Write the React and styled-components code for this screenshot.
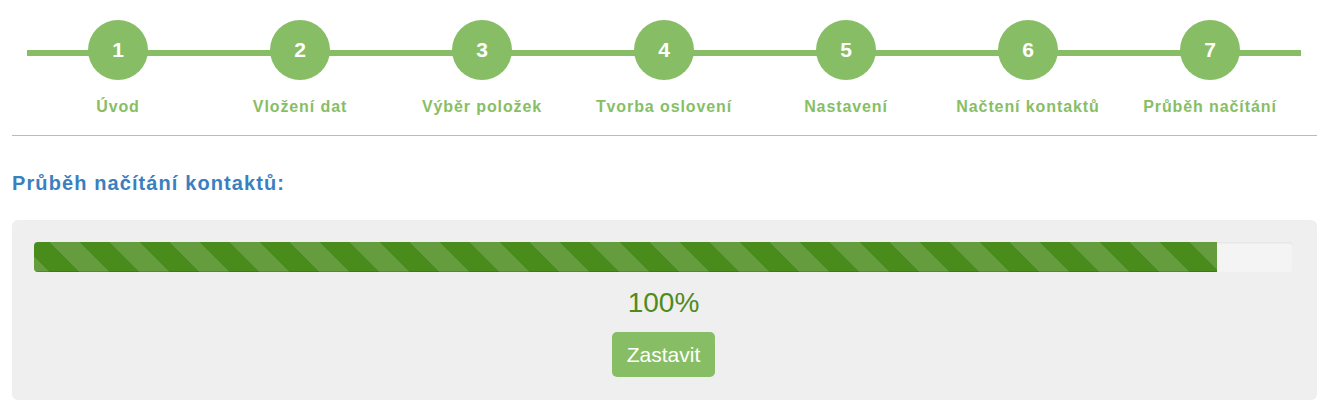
import React from "react";
import styled, { createGlobalStyle } from "styled-components";

const GlobalStyle = createGlobalStyle`
  body {
    margin: 0;
    background: #fff;
    font-family: "Liberation Sans", Arial, sans-serif;
  }
`;

const Page = styled.div`
  padding: 0 14px 0 12px;
`;

const Stepper = styled.ol`
  display: flex;
  list-style: none;
  margin: 0;
  padding: 20px 16px 0 15px;
`;

const Step = styled.li`
  position: relative;
  flex: 1;
  display: flex;
  flex-direction: column;
  align-items: center;

  &::before {
    content: "";
    position: absolute;
    left: 0;
    right: 0;
    top: 30px;
    height: 6px;
    background-color: #87be65;
  }
`;

const Circle = styled.span`
  position: relative;
  width: 60px;
  height: 60px;
  border-radius: 50%;
  background-color: #87be65;
  color: #fff;
  font-size: 21px;
  font-weight: bold;
  display: flex;
  align-items: center;
  justify-content: center;
`;

const StepLabel = styled.span`
  margin-top: 18px;
  font-size: 16px;
  line-height: 18px;
  letter-spacing: 0.9px;
  font-weight: bold;
  color: #87be65;
  white-space: nowrap;
`;

const Divider = styled.div`
  margin-top: 19px;
  height: 1px;
  background-color: #bbb;
`;

const Heading = styled.h2`
  margin: 35px 0 25px;
  font-size: 20px;
  line-height: 24px;
  letter-spacing: 1.1px;
  font-weight: bold;
  color: #3a7fc0;
`;

const Panel = styled.div`
  background-color: #efefef;
  border-radius: 6px;
  padding: 22px 24px 23px 22px;
  display: flex;
  flex-direction: column;
  align-items: center;
`;

const Track = styled.div`
  align-self: stretch;
  height: 30px;
  border-radius: 4px;
  background-color: #f4f4f4;
  box-shadow: inset 0 1px 2px rgba(0, 0, 0, 0.08);
  overflow: hidden;
  display: flex;
`;

const Fill = styled.div`
  height: 100%;
  background-color: #4a8c1c;
  background-image: linear-gradient(
    45deg,
    rgba(255, 255, 255, 0.15) 25%,
    transparent 25%,
    transparent 50%,
    rgba(255, 255, 255, 0.15) 50%,
    rgba(255, 255, 255, 0.15) 75%,
    transparent 75%,
    transparent
  );
  background-size: 60px 60px;
  background-position: 16px 0;
  box-shadow: inset 0 -1px 0 rgba(0, 0, 0, 0.15);
`;

const Percent = styled.div`
  margin-top: 15px;
  font-size: 28px;
  line-height: 32px;
  color: #4f8a1f;
`;

const Button = styled.button`
  margin-top: 13px;
  height: 45px;
  padding: 0 15px;
  border: none;
  border-radius: 5px;
  background-color: #87be65;
  color: #fff;
  font-family: "Liberation Sans", Arial, sans-serif;
  font-size: 21px;
  cursor: pointer;
`;

const steps = [
  "Úvod",
  "Vložení dat",
  "Výběr položek",
  "Tvorba oslovení",
  "Nastavení",
  "Načtení kontaktů",
  "Průběh načítání",
];

const App = () => {
  const progress = 94;

  return (
    <>
      <GlobalStyle />
      <Page>
        <Stepper>
          {steps.map((label, i) => (
            <Step key={label}>
              <Circle>{i + 1}</Circle>
              <StepLabel>{label}</StepLabel>
            </Step>
          ))}
        </Stepper>
        <Divider />
        <Heading>Průběh načítání kontaktů:</Heading>
        <Panel>
          <Track>
            <Fill style={{ width: `${progress}%` }} />
          </Track>
          <Percent>100%</Percent>
          <Button>Zastavit</Button>
        </Panel>
      </Page>
    </>
  );
};

export default App;
